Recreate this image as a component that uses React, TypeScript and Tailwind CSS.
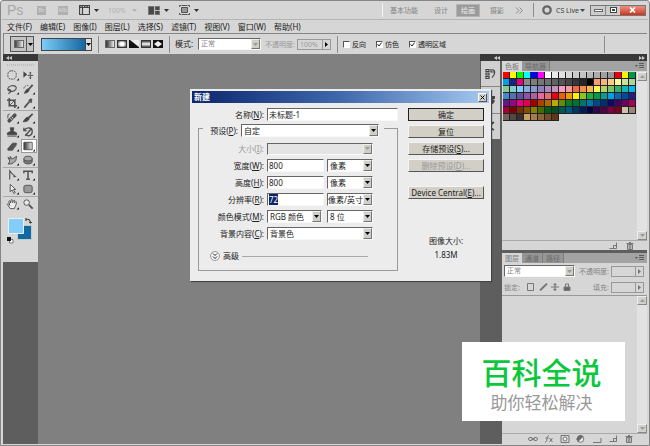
import type { ReactNode } from "react";

const swatchRows: string[][] = [
  ["#f00", "#ff0", "#0f0", "#0ff", "#00f", "#f0f", "#fff", "#ebebeb", "#e1e1e1", "#d7d7d7", "#ccc", "#c2c2c2", "#b7b7b7", "#acacac", "#a0a0a0", "#959595", "#e60012", "#fff100", "#009944"],
  ["#00a0e9", "#1d2088", "#e4007f", "#898989", "#7d7d7d", "#777", "#707070", "#626262", "#555", "#464646", "#363636", "#262626", "#000", "#f29b76", "#f6b37f", "#facd89", "#fff799", "#cce198", "#acd598"],
  ["#89c997", "#84ccc9", "#7ecef4", "#88abda", "#8c97cb", "#8f82bc", "#aa89bd", "#c490bf", "#f19ec2", "#f29c9f", "#ec6941", "#f19149", "#f8b551", "#fff45c", "#b3d465", "#80c269", "#32b16c", "#13b5b1", "#00b7ee"],
  ["#448aca", "#556fb5", "#5f52a0", "#8957a1", "#ae5da1", "#ea68a2", "#eb6877", "#e60012", "#eb6100", "#f39800", "#fff100", "#8fc31f", "#22ac38", "#009944", "#009e96", "#00a0e9", "#0068b7", "#00479d", "#1d2088"],
  ["#601986", "#920783", "#e4007f", "#e5004f", "#a40000", "#a84200", "#ac6a00", "#b7aa00", "#638c0b", "#097c25", "#007130", "#00736d", "#0075a9", "#004986", "#002e73", "#100964", "#440062", "#6a005f", "#a4005b"],
  ["#a40035", "#7d0000", "#7f2d00", "#834e00", "#8a8000", "#486a00", "#005e15", "#005120", "#005752", "#005982", "#003567", "#001c58", "#03004c", "#31004a", "#500047", "#7e0043", "#7d0022", "#cfc0aa", "#998675"],
  ["#736357", "#534741", "#37302d", "#c9a063", "#a67c52", "#8c6239", "#754c24", "#603813"],
];

function Caret({ className = "" }: { className?: string }) {
  return (
    <svg viewBox="0 0 5 3" className={`h-[3px] w-[5px] shrink-0 ${className}`} fill="currentColor" aria-hidden="true">
      <path d="M0 0h5L2.5 3z" />
    </svg>
  );
}

function Rule({ className = "" }: { className?: string }) {
  return <span className={`w-px shrink-0 bg-[#8e8e8e] ${className}`} />;
}

interface PickProps {
  id: string;
  options: string[];
  className: string;
  disabled?: boolean;
  tone?: string;
}

function Pick({ id, options, className, disabled, tone = "bg-white text-[#222]" }: PickProps) {
  return (
    <span className={`grid items-stretch border border-[#f8f8f8] border-t-[#666] border-l-[#666] ${tone} ${className}`}>
      <select
        id={id}
        disabled={disabled}
        className="col-start-1 row-start-1 min-w-0 appearance-none bg-transparent pl-[2px] leading-[10px] outline-none"
      >
        {options.map((o) => (
          <option key={o}>{o}</option>
        ))}
      </select>
      <span className="pointer-events-none col-start-1 row-start-1 flex w-[9px] items-center justify-center justify-self-end border border-[#777] border-t-[#eee] border-l-[#eee] bg-[#d0cec8]">
        <Caret className={disabled ? "text-[#999]" : "text-black"} />
      </span>
    </span>
  );
}

function Tick({ id, label, checked }: { id: string; label: string; checked?: boolean }) {
  return (
    <label htmlFor={id} className="flex items-center gap-[2px] text-[#222]">
      <span className="grid size-[7px] border border-white border-t-[#555] border-l-[#555] bg-white">
        <input id={id} type="checkbox" defaultChecked={checked} className="peer col-start-1 row-start-1 size-[5px] appearance-none" />
        <svg viewBox="0 0 5 5" className="pointer-events-none invisible col-start-1 row-start-1 size-[5px] peer-checked:visible" fill="none" stroke="#222" aria-hidden="true">
          <path d="M.5 2.2 2 4 4.6.6" />
        </svg>
      </span>
      {label}
    </label>
  );
}

function TitleBar() {
  return (
    <header className="flex h-[19px] items-center border-b border-[#b4b4b4] pl-[5px] text-[7px] text-[#848484]">
      <span className="w-[30px] font-['Liberation_Sans',sans-serif] text-[14px] leading-none text-[#a6a6a6]">Ps</span>
      <button aria-label="Bridge" className="grid h-[9px] w-[9px] place-items-center bg-[#b0b0b0] text-[6px] leading-none text-[#d8d8d8]">Br</button>
      <button aria-label="Mini Bridge" className="ml-[12px] grid h-[9px] w-[10px] place-items-center bg-[#b0b0b0] text-[6px] leading-none text-[#d8d8d8]">Mb</button>
      <button aria-label="查看额外内容" className="ml-[11px] flex items-center gap-[4px] text-[#333]">
        <svg viewBox="0 0 11 10" className="h-[10px] w-[11px]" fill="none" stroke="#444">
          <path d="M.5.5h10v9H.5z M.5 2.5h10 M3.5 2.5v7" strokeWidth="1.2" />
          <path d="M0 1.5h11" strokeWidth="1.5" strokeDasharray="1.5 1" />
        </svg>
        <Caret />
      </button>
      <button className="ml-[9px] flex items-center gap-[6px] text-[#b2b2b2]">
        <span className="w-[18px] text-left">100%</span>
        <Caret />
      </button>
      <button aria-label="排列文档" className="ml-[11px] flex items-center gap-[4px] text-[#333]">
        <svg viewBox="0 0 12 9" className="h-[9px] w-[12px]">
          <path d="M0 0h12v9H0z" fill="#777" />
          <path d="M1 1h5v7H1z M7.500 1H11v3H7.500z M7.500 5H11v3H7.500z" fill="#4a4a4a" />
          <path d="M6.500 0v9 M7 4.500h5" stroke="#ccc" strokeWidth=".8" />
        </svg>
        <Caret />
      </button>
      <button aria-label="屏幕模式" className="ml-[10px] flex items-center gap-[4px] text-[#333]">
        <svg viewBox="0 0 11 10" className="h-[10px] w-[11px]" fill="none" stroke="#555">
          <path d="M2.500 2.500h6v5h-6z" fill="#999" />
          <path d="M.5 2V.5H2 M9 .5h1.500V2 M.5 8v1.500H2 M9 9.500h1.500V8 M2.500.5h6 M2.500 9.500h6" />
        </svg>
        <Caret />
      </button>
      <nav className="ml-auto flex h-full items-center" aria-label="工作区">
        <Rule className="h-[14px] bg-[#f4f4f4]" />
        <button className="ml-[7px] w-[30px] text-left">基本功能</button>
        <button className="ml-[14px] w-[16px] text-left">设计</button>
        <button className="ml-[6px] h-[13px] w-[24px] border border-[#b4b4b4] bg-[#9b9b9b] text-[#eee]">绘画</button>
        <button className="ml-[10px] w-[16px] text-left">摄影</button>
        <button aria-label="更多工作区" className="ml-[9px]">
          <svg viewBox="0 0 9 7" className="h-[7px] w-[9px]" fill="none" stroke="#8c8c8c">
            <path d="m1 .5 3 3-3 3 M4.500.5l3 3-3 3" />
          </svg>
        </button>
        <Rule className="ml-[9px] h-[14px]" />
        <button className="ml-[8px] flex items-center text-[8px] text-[#444]">
          <svg viewBox="0 0 10 10" className="mr-[4px] size-[10px]">
            <circle cx="5" cy="5" r="3.700" fill="none" stroke="#666" strokeWidth="2.300" />
          </svg>
          <span className="w-[24px] text-left text-[7px]">CS Live</span>
          <Caret />
        </button>
        <div className="mr-[2px] ml-[5px] flex h-[11px] border border-[#777] bg-[#cdcdcd]">
          <button aria-label="最小化" className="flex w-[15px] items-center justify-center border-r border-[#888]">
            <span className="h-[3px] w-[9px] border border-[#666] bg-white" />
          </button>
          <button aria-label="还原" className="flex w-[14px] items-center justify-center">
            <span className="h-[6px] w-[7px] border border-[#444] bg-white p-px"><span className="block h-[2px] w-[3px] bg-[#444]" /></span>
          </button>
          <button aria-label="关闭" className="flex w-[25px] items-center justify-center bg-linear-to-b from-[#e59382] to-[#c9301b]">
            <svg viewBox="0 0 7 6" className="h-[6px] w-[7px]" stroke="#fff" strokeWidth="1.700">
              <path d="m1 .5 5 5 M6 .5l-5 5" />
            </svg>
          </button>
        </div>
      </nav>
    </header>
  );
}

const menus = ["文件(F)", "编辑(E)", "图像(I)", "图层(L)", "选择(S)", "滤镜(T)", "视图(V)", "窗口(W)", "帮助(H)"];

function OptionsBar() {
  return (
    <div className="mx-px flex h-[21px] items-center border-t border-l border-[#858585] pl-[6px] text-[7px]">
      <button aria-label="渐变工具" className="flex h-[16px] w-[24px] items-center border border-[#555] bg-[#c4c4c4]">
        <span className="flex h-full w-[16px] items-center justify-center border-r border-[#555]">
          <span className="h-[8px] w-[10px] border border-[#666] bg-linear-to-r from-[#444] to-[#eee]" />
        </span>
        <Caret className="ml-px" />
      </button>
      <button aria-label="渐变颜色" className="ml-[7px] flex h-[13px] w-[51px] border border-[#444]">
        <span className="h-full flex-1 bg-linear-to-r from-[#7ccdfa] to-[#1068a0]" />
        <span className="flex h-full w-[6px] items-center border-l border-[#444] bg-[#ddd]"><Caret /></span>
      </button>
      <Rule className="ml-[6px] h-[17px]" />
      <div className="ml-[6px] flex gap-[2px]">
        <button aria-label="线性渐变" className="h-[8px] w-[10px] border border-[#666] bg-linear-to-r from-[#333] to-[#eee]" />
        <button aria-label="径向渐变" className="h-[8px] w-[10px] border border-[#333] bg-[radial-gradient(#fff_35%,#333)]" />
        <button aria-label="角度渐变" className="h-[8px] w-[10px] bg-linear-to-tr from-[#111] from-50% to-[#eee] to-60%" />
        <button aria-label="对称渐变" className="h-[8px] w-[10px] border border-[#333] bg-linear-to-b from-[#444] via-white to-[#444]" />
        <button aria-label="菱形渐变" className="grid h-[8px] w-[10px] place-items-center bg-[#111]">
          <svg viewBox="0 0 8 6" className="h-[6px] w-[8px]" fill="#eee"><path d="M4 0l4 3-4 3-4-3z" /></svg>
        </button>
      </div>
      <Rule className="ml-[6px] h-[17px]" />
      <label htmlFor="mode" className="ml-[5px] w-[23px] text-[8px] text-[#222]">模式:</label>
      <Pick id="mode" options={["正常"]} className="h-[12px] w-[63px]" tone="bg-white text-[#888]" disabled />
      <label htmlFor="opacity" className="ml-[4px] w-[32px] text-[#999]">不透明度:</label>
      <span className="flex h-[11px] w-[34px] border border-[#999] text-[#999]">
        <input id="opacity" defaultValue="100%" disabled className="w-[24px] min-w-0 bg-transparent pl-[2px]" />
        <button aria-label="调整不透明度" className="flex flex-1 items-center justify-center border-l border-[#999]">
          <Caret className="-rotate-90 text-black" />
        </button>
      </span>
      <Rule className="ml-[6px] h-[17px]" />
      <div className="ml-[5px] flex gap-[10px]">
        <Tick id="reverse" label="反向" />
        <Tick id="dither" label="仿色" checked />
        <Tick id="transparency" label="透明区域" checked />
      </div>
      <Rule className="mr-[42px] ml-auto h-[17px]" />
    </div>
  );
}

interface Tool {
  name: string;
  art: ReactNode;
  active?: boolean;
  plain?: boolean;
}

const toolGroups: Tool[][] = [
  [
    { name: "选框", art: <rect x="1.500" y="1.500" width="9" height="9" rx="3.500" fill="none" strokeDasharray="2.200 .8" /> },
    { name: "移动", plain: true, art: <><path d="M1 2v7l4-3.500z" fill="#444" stroke="none" /><path d="M8.500 3.500v6 M5.500 6.500h6 M7.500 4l1-1 1 1 M7.500 9l1 1 1-1" /></> },
    { name: "套索", art: <path d="M3 8C.5 7 1 3 5.500 2.500S11.500 4 10 6.500 4 9 3 7.500s2-1 1.500 1S2.500 10.500 2 11" fill="none" strokeWidth="1.300" /> },
    { name: "快速选择", art: <><path d="M11 1.500 7 6" strokeWidth="2" /><path d="M7 5.500c1 2-1 5-5 5 1-1 1-4 5-5z" fill="#444" /><path d="M1.500 5.500c0-3 4-4 5-3" fill="none" strokeDasharray="1.500 1" /></> },
    { name: "裁剪", art: <><path d="M3 .5V9h8.500 M.5 3H9v8.500" fill="none" strokeWidth="1.700" /><path d="M2.500 9.500 10 2" /></> },
    { name: "吸管", art: <><path d="m7 2.500 3 3" strokeWidth="2" /><path d="m8 4 2-2.500" strokeWidth="2.500" /><path d="M7.500 4.500 2 11" strokeWidth="1.800" /></> },
  ],
  [
    { name: "修复画笔", art: <><path d="m3 9 6-6" strokeWidth="4" strokeLinecap="round" /><path d="m5.500 4.500 2 2 M4 6l2 2" stroke="#ddd" /><path d="M1.500 6.500V2.500l2-1" fill="none" /></> },
    { name: "画笔", art: <><path d="M11 1.500 6.500 6" strokeWidth="2" /><path d="M6.500 5c2 2.500-1 5.500-6 5 2-1 2-5 6-5z" fill="#444" /></> },
    { name: "仿制图章", art: <path d="M4 1.500h4l-1 4h1l3 1.500v2H1V7l3-1.500h1z M1 10.500h10" fill="#444" /> },
    { name: "历史记录画笔", art: <><path d="M2 4c3-4 9-3 8.500 2S5 11 3.500 8 M1.500 1.500v3h3" fill="none" strokeWidth="1.500" /><path d="M10 2 3 10" strokeWidth="1.500" /></> },
    { name: "橡皮擦", art: <path d="m1.500 9 5-6h4l-4 6z M6.500 9v1.500h-5V9 M10.500 3v2l-4 5.500" fill="#555" /> },
    { name: "渐变", active: true, art: <path d="M1.500 2h9v8h-9z" fill="url(#toolFill)" /> },
    { name: "涂抹", art: <path d="M2 10.500 3.500 7 1.500 3l2.500 2V2l2 3 5-3-1 5-4 3z" fill="#aaa" /> },
    { name: "海绵", art: <><path d="M1.500 5v3c0 3 9 3 9 0V4z" fill="#777" /><ellipse cx="6" cy="4.500" rx="4.500" ry="2.500" fill="#a5a5a5" /></> },
  ],
  [
    { name: "钢笔", art: <path d="M3.500 11V1.500l3 3.500 3 2.500-2 .5" fill="none" strokeWidth="1.200" /> },
    { name: "文字", art: <path d="M1.500 4V2h9v2 M6 2v8.500 M4 10.500h4" fill="none" strokeWidth="1.600" /> },
    { name: "路径选择", art: <path d="M4 1v8l2-2 2 4 1.500-1-2-3.500H10z" fill="#eee" /> },
    { name: "矩形", art: <rect x="1.500" y="2" width="9" height="8" rx="2" fill="#999" /> },
  ],
  [
    { name: "抓手", art: <path d="M4 11 1 6.500c0-1.500 1.500-.5 2.500 1L2.500 3c.5-1 1.500-.5 2 2L5 1.500c1-1 1.500 0 1.500 3L8 2c1-.5 1 1 .5 3L10 3.500c1.500 0 .5 3-.5 5L8.500 11z" fill="#eee" /> },
    { name: "缩放", plain: true, art: <><circle cx="4.500" cy="4.500" r="3" fill="#e8e8e8" /><path d="m7 7 4 4" strokeWidth="2" /></> },
  ],
];

function Toolbox() {
  return (
    <aside className="flex w-[35px] shrink-0 flex-col bg-[#5e5e5e]">
      <div className="flex h-[7px] items-center bg-[#383838] pl-[3px]"><DoubleArrow /></div>
      <div className="flex flex-col bg-[#d6d6d6] pb-[18px]">
        <div className="flex h-[7px] items-center justify-center"><span className="h-[2px] w-[27px] border-y border-dotted border-[#bbb]" /></div>
        {toolGroups.map((group, g) => (
          <div key={g} className={`grid grid-cols-2 px-px ${g < toolGroups.length - 1 ? "border-b border-[#a8a8a8]" : ""}`}>
            {group.map((tool) => (
              <button key={tool.name} aria-label={tool.name} className={`flex h-[14px] items-center justify-center ${tool.active ? "border border-[#999] bg-white" : ""}`}>
                <svg viewBox="0 0 15 13" className="h-[12px] w-[15px] shrink-0" stroke="#505050">
                  <defs>
                    <linearGradient id="toolFill"><stop stopColor="#333" /><stop offset="1" stopColor="#eee" /></linearGradient>
                  </defs>
                  <g transform="translate(1 .5)">{tool.art}</g>
                  {!tool.plain && <path d="M14.500 10v2.500H12z" fill="#111" stroke="none" />}
                </svg>
              </button>
            ))}
          </div>
        ))}
        <div className="mt-[6px] flex items-start pl-[3px]">
          <svg viewBox="0 0 28 27" className="h-[27px] w-[28px]" role="img" aria-label="前景色和背景色">
            <path d="M11.500 8.500h14v14h-14z" fill="#1069a2" stroke="#c8c8c8" />
            <path d="M2.500 1.500h15v15h-15z" fill="#82cdf9" stroke="#eee" />
            <path d="M20 2.500c3-1 4.500 1 4.500 4 M20 1v3 M23 5.500h3" stroke="#444" fill="none" strokeWidth="1.200" />
            <path d="M3.500 22.500h3.500v3.500H3.500z" fill="#fff" stroke="#666" strokeWidth=".8" />
            <path d="M1 20h4v4H1z" fill="#111" />
          </svg>
        </div>
      </div>
    </aside>
  );
}

function DoubleArrow({ flip }: { flip?: boolean }) {
  return (
    <svg viewBox="0 0 6 4" className={`h-[4px] w-[6px] ${flip ? "-scale-x-100" : ""}`} fill="#ccc" aria-hidden="true">
      <path d="M3 0v4L0 2z M6 0v4L3 2z" />
    </svg>
  );
}

function ScrollBar() {
  const cap = "flex h-[9px] items-center justify-center border border-[#888] border-t-[#eee] border-l-[#eee] bg-[#d2d0cc] text-[#999]";
  return (
    <div className="flex w-[10px] shrink-0 flex-col justify-between bg-[#e2e2e2]">
      <button aria-label="向上滚动" className={cap}><Caret className="rotate-180" /></button>
      <button aria-label="向下滚动" className={cap}><Caret /></button>
    </div>
  );
}

function Tabs({ names }: { names: string[] }) {
  return (
    <div className="flex h-[10px] shrink-0 bg-[#a3a3a3] text-[7px] leading-none text-[#6a6a6a]">
      {names.map((n, i) => (
        <button key={n} className={i === 0 ? "w-[20px] bg-[#d6d6d6] text-[#777]" : "border-r border-[#7d7d7d] bg-[#969696] px-[3px]"}>{n}</button>
      ))}
      <button aria-label="面板菜单" className="mr-[3px] ml-auto flex items-center">
        <svg viewBox="0 0 9 6" className="h-[6px] w-[9px]" stroke="#555">
          <path d="M4 .5h5 M4 2.500h5 M4 4.500h5" strokeWidth=".9" /><path d="M0 2h3L1.500 4z" fill="#555" stroke="none" />
        </svg>
      </button>
    </div>
  );
}

const newIcon = <path d="M1.500 6.500h7v-6 M5.500 6V3.500h3" fill="none" />;
const trashIcon = <path d="M2.500 2.500h5v5h-5z M1.500 1.500h7 M4 .5h2 M4.200 3v4 M5.800 3v4" fill="none" />;
const layerActions: { name: string; art: ReactNode }[] = [
  { name: "链接图层", art: <><rect x=".5" y="2.500" width="4" height="3" rx="1.500" fill="none" /><rect x="5.500" y="2.500" width="4" height="3" rx="1.500" fill="none" /><path d="M3 4h4" /></> },
  { name: "图层样式", art: <path d="M5 .8C3.500.5 3.500 2 3 4S2.500 7.500 1 7.200 M1.500 3h3 M5.500 3l3 4 M8.500 3l-3 4" fill="none" /> },
  { name: "图层蒙版", art: <><path d="M1 .5h8v7H1z" fill="none" /><circle cx="5" cy="4" r="2" fill="#eee" /></> },
  { name: "调整图层", art: <><circle cx="4.500" cy="4" r="3.300" fill="#eee" /><path d="M2 6.500 7 1.500A3.300 3.300 0 0 0 2 6.500z" fill="#666" /></> },
  { name: "新建组", art: <path d="M1 7.500h8V3" fill="none" /> },
  { name: "新建图层", art: newIcon },
  { name: "删除图层", art: trashIcon },
];

function IconButton({ name, art }: { name: string; art: ReactNode }) {
  return (
    <button aria-label={name}>
      <svg viewBox="0 0 10 8" className="h-[8px] w-[10px]" stroke="#777">{art}</svg>
    </button>
  );
}

function SmallField({ id, label }: { id: string; label: string }) {
  return (
    <span className="ml-auto flex items-center gap-[2px]">
      <label htmlFor={id}>{label}</label>
      <span className="flex h-[11px] w-[33px] border border-[#999]">
        <input id={id} disabled className="w-[23px] bg-transparent" />
        <button aria-label={`调整${label}`} className="flex flex-1 items-center justify-center border-l border-[#999]"><Caret className="-rotate-90 text-[#777]" /></button>
      </span>
    </span>
  );
}

function Dock() {
  return (
    <aside className="flex w-[167px] shrink-0 flex-col bg-[#5e5e5e]">
      <div className="flex h-[7px] shrink-0 items-center bg-[#383838]">
        <span className="ml-[14px]"><DoubleArrow /></span>
        <span className="mr-[2px] ml-auto"><DoubleArrow flip /></span>
      </div>
      <div className="flex min-h-0 flex-1">
        <div className="mr-[2px] ml-px flex h-[78px] w-[19px] shrink-0 flex-col divide-y divide-[#888] bg-[#d0d0d0]">
          <button aria-label="历史记录" className="grid flex-1 place-items-center">
            <svg viewBox="0 0 11 11" className="size-[11px]" fill="none" stroke="#444"><path d="M1 1.500h3v2H1z M1 5h3v2H1z M1 8.500h3v2H1z M7 2c3-1 4 4 0 7.500 M6 1v3h3" strokeWidth="1.200" /></svg>
          </button>
          <button aria-label="画笔预设" className="grid flex-1 place-items-center">
            <svg viewBox="0 0 11 11" className="size-[11px]" fill="#444"><path d="M1 1h2v5H1z M4 2h2v4H4z M7 2h3v3H8l2 2-2 3H3V7h4z" /></svg>
          </button>
          <button aria-label="画笔" className="grid flex-1 place-items-center">
            <svg viewBox="0 0 11 11" className="size-[11px]" fill="none" stroke="#444"><path d="m9 1-5 5 5 3 M8 1 6 4" strokeWidth="1.500" /></svg>
          </button>
        </div>
        <div className="flex min-w-0 flex-1 flex-col gap-[3px]">
          <section className="flex h-[189px] shrink-0 flex-col bg-[#d6d6d6]">
            <Tabs names={["色板", "导航器"]} />
            <div className="flex flex-1 pt-px pl-px">
              <div className="flex flex-1 flex-col">
                {swatchRows.map((row, r) => (
                  <div key={r} className="flex">
                    {row.map((c, i) => (
                      <button key={i} aria-label={c} className="size-[7px] border-r border-b border-[#222]" style={{ backgroundColor: c }} />
                    ))}
                  </div>
                ))}
              </div>
              <ScrollBar />
            </div>
            <div className="flex h-[10px] items-center justify-end gap-[7px] border-t border-[#aaa] pr-[12px]">
              <IconButton name="新建色板" art={newIcon} />
              <IconButton name="删除色板" art={trashIcon} />
            </div>
          </section>
          <section className="flex min-h-0 flex-1 flex-col bg-[#d6d6d6]">
            <Tabs names={["图层", "通道", "路径"]} />
            <div className="flex flex-col gap-[4px] py-[2px] pr-[3px] pl-[2px] text-[7px] text-[#848484]">
              <div className="flex h-[12px] items-center">
                <label htmlFor="blend" className="sr-only">混合模式</label>
                <Pick id="blend" options={["正常"]} className="h-[12px] w-[71px]" tone="bg-white text-[#888]" disabled />
                <SmallField id="layerOpacity" label="不透明度:" />
              </div>
              <div className="flex h-[12px] items-center gap-[2px]">
                <span className="w-[20px]">锁定:</span>
                <IconButton name="锁定透明像素" art={<path d="M1.500.5h6v7h-6z" fill="none" />} />
                <IconButton name="锁定图像像素" art={<path d="M9 .5 5 4.500 M5.500 4 2 7.500" strokeWidth="1.800" />} />
                <IconButton name="锁定位置" art={<path d="M5 0v8 M1 4h8 M3.500 1.500h3 M3.500 6.500h3" strokeWidth="1.200" />} />
                <IconButton name="全部锁定" art={<><path d="M2 4h6v3.500H2z" fill="#666" /><path d="M3.500 4V1h3v3" fill="none" /></>} />
                <SmallField id="fill" label="填充:" />
              </div>
            </div>
            <div className="flex flex-1 justify-end border-t border-[#999]"><ScrollBar /></div>
            <div className="flex h-[11px] shrink-0 items-center justify-end gap-[6px] border-t border-[#aaa] pr-[13px]">
              {layerActions.map((a) => <IconButton key={a.name} {...a} />)}
            </div>
          </section>
        </div>
      </div>
    </aside>
  );
}

function Key({ text, k }: { text: string; k: string }) {
  return <>{text}(<u>{k}</u>)</>;
}

interface RowProps {
  id: string;
  text: string;
  k: string;
  muted?: boolean;
  children: ReactNode;
}

function FormRow({ id, text, k, muted, children }: RowProps) {
  return (
    <div className="flex h-[13px] items-center gap-[3px]">
      <label htmlFor={id} className={`w-[65px] text-right ${muted ? "text-[#999]" : ""}`}><Key text={text} k={k} />:</label>
      {children}
    </div>
  );
}

const fieldBox = "border border-[#f8f8f8] border-t-[#666] border-l-[#666] bg-white pl-px leading-none outline-none";
const dialogButton = "h-[13px] border border-[#555] border-t-[#f4f4f4] border-l-[#f4f4f4] bg-[#d2cfc7] leading-none whitespace-nowrap";

function NewDialog() {
  return (
    <div role="dialog" aria-label="新建" className="absolute top-[88px] left-[189px] flex w-[301px] flex-col border-2 border-[#ececec] bg-[#ececec] text-[8px] leading-none text-[#222] shadow-[1px_1px_1px_#444]">
      <div className="flex h-[12px] items-center justify-between bg-linear-to-r from-[#0d266e] via-[#4068ac] to-[#a6caf0] px-[2px] font-bold text-white">
        <span>新建</span>
        <button aria-label="关闭" className="grid h-[9px] w-[9px] place-items-center border border-[#555] border-t-white border-l-white bg-[#d4d0c8]">
          <svg viewBox="0 0 5 5" className="size-[5px]" stroke="#111"><path d="m.5.5 4 4 M4.500.5l-4 4" /></svg>
        </button>
      </div>
      <form className="flex gap-[10px] pt-[5px] pr-[5px] pb-[8px] pl-[6px]" onSubmit={(e) => e.preventDefault()}>
        <div className="flex w-[200px] flex-col">
          <div className="flex h-[13px] items-center gap-[3px] pl-px">
            <label htmlFor="docName" className="w-[65px] text-right"><Key text="名称" k="N" />:</label>
            <input id="docName" defaultValue="未标题-1" className={`h-[13px] min-w-0 flex-1 ${fieldBox}`} />
          </div>
          <fieldset className="mt-[3px] border border-[#999] pb-[8px]">
            <legend className="ml-[4px] h-[9px] pr-[5px]">
              <div className="flex h-[13px] items-center gap-[3px]">
                <label htmlFor="preset" className="w-[35px] text-right"><Key text="预设" k="P" />:</label>
                <Pick id="preset" options={["自定"]} className="h-[13px] w-[138px]" />
              </div>
            </legend>
            <div className="flex flex-col gap-[4px] pt-[9px]">
              <FormRow id="size" text="大小" k="I" muted><Pick id="size" options={[""]} className="h-[12px] w-[106px]" tone="bg-[#e4e4e4] text-[#999]" disabled /></FormRow>
              <FormRow id="docWidth" text="宽度" k="W">
                <input id="docWidth" defaultValue="800" className={`h-[13px] w-[57px] ${fieldBox}`} />
                <Pick id="widthUnit" options={["像素"]} className="h-[13px] w-[46px]" />
              </FormRow>
              <FormRow id="docHeight" text="高度" k="H">
                <input id="docHeight" defaultValue="800" className={`h-[13px] w-[57px] ${fieldBox}`} />
                <Pick id="heightUnit" options={["像素"]} className="h-[13px] w-[46px]" />
              </FormRow>
              <FormRow id="resolution" text="分辨率" k="R">
                <input
                  id="resolution"
                  defaultValue="72"
                  autoFocus
                  onFocus={(e) => e.currentTarget.select()}
                  className={`h-[13px] w-[57px] selection:bg-[#0a246a] selection:text-white ${fieldBox}`}
                />
                <Pick id="resolutionUnit" options={["像素/英寸"]} className="h-[13px] w-[46px] [&>select]:pl-0" />
              </FormRow>
              <FormRow id="colorMode" text="颜色模式" k="M">
                <Pick id="colorMode" options={["RGB 颜色"]} className="h-[13px] w-[55px]" />
                <span className="w-[48px] pl-[2px]"><Pick id="depth" options={["8 位"]} className="h-[13px] w-[46px]" /></span>
              </FormRow>
              <FormRow id="background" text="背景内容" k="C"><Pick id="background" options={["背景色"]} className="h-[13px] w-[106px]" /></FormRow>
            </div>
            <div className="mt-[10px] flex h-[12px] items-center gap-[3px] pr-[29px] pl-[11px]">
              <button type="button" className="flex items-center gap-[3px]">
                <svg viewBox="0 0 10 10" className="size-[10px]" fill="none" stroke="#222">
                  <circle cx="5" cy="5" r="4.500" stroke="#999" fill="#f6f6f6" />
                  <path d="m3 2.500 2 2 2-2 M3 5.500l2 2 2-2" />
                </svg>
                高级
              </button>
              <span className="h-px flex-1 bg-[#aaa]" />
            </div>
          </fieldset>
        </div>
        <div className="flex w-[76px] flex-col gap-[4px]">
          <button className="h-[13px] border border-[#222] bg-[#d2cfc7] leading-none">确定</button>
          <button type="button" className={dialogButton}>复位</button>
          <button type="button" className={dialogButton}><Key text="存储预设" k="S" />...</button>
          <button type="button" disabled className={`${dialogButton} text-[#999]`}><Key text="删除预设" k="D" />...</button>
          <button type="button" className={`${dialogButton} mt-[10px]`}><Key text="Device Central" k="E" />...</button>
          <div className="mt-[34px] flex flex-col gap-[6px] text-center">
            <span>图像大小:</span>
            <span>1.83M</span>
          </div>
        </div>
      </form>
    </div>
  );
}

export default function App() {
  return (
    <div className="relative flex h-screen w-full flex-col overflow-hidden rounded-t-[3px] border border-[#858585] bg-[#d6d6d6] px-px pb-px font-['Noto_Sans','Noto_Sans_CJK_SC',sans-serif] leading-none">
      <TitleBar />
      <nav className="flex h-[13px] items-center gap-[8px] pl-[5px] text-[8px] text-[#222]" aria-label="主菜单">
        {menus.map((m) => <button key={m}>{m}</button>)}
      </nav>
      <OptionsBar />
      <div className="mx-px flex min-h-0 flex-1">
        <Toolbox />
        <main className="min-w-0 flex-1 bg-[#808080]" />
        <Dock />
      </div>
      <NewDialog />
      <div className="absolute right-[24px] bottom-[24px] flex h-[79px] w-[163px] flex-col items-center justify-center gap-[6px] bg-white pt-[6px] pr-[4px]">
        <strong className="text-[30px] leading-none font-medium text-[#0ac83c]">百科全说</strong>
        <span className="text-[17px] leading-none text-[#999]">助你轻松解决</span>
      </div>
    </div>
  );
}
